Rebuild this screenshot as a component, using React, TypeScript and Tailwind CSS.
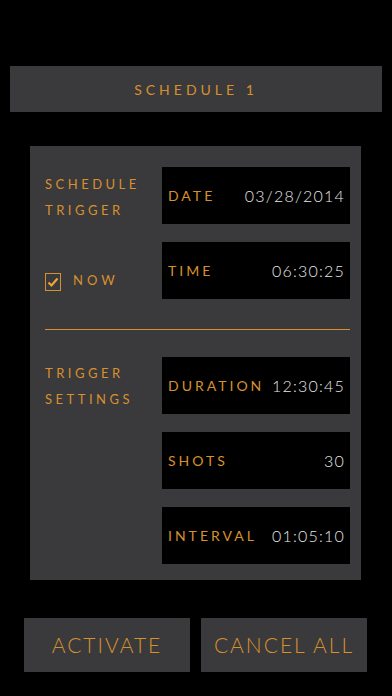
import React from 'react';

const orange = 'text-[#d8902c]';

const Field: React.FC<{ label: string; value: string }> = ({ label, value }) => (
  <div className="h-[57px] bg-black flex items-center justify-between pl-[6px] pr-[5px]">
    <span className={`${orange} text-[14px] tracking-[3px]`}>{label}</span>
    <span className="text-[#e6e6e6] text-[16px] tracking-[1.2px] font-light">{value}</span>
  </div>
);

const App: React.FC = () => {
  return (
    <div
      className="w-[392px] h-[696px] bg-black overflow-hidden font-normal"
      style={{ fontFamily: 'Lato, "Open Sans", sans-serif' }}
    >
      <div className="pt-[66px] px-[10px]">
        <div className="h-[46px] bg-[#3a3a3c] flex items-center justify-center">
          <span className={`${orange} text-[14px] tracking-[4px]`}>SCHEDULE 1</span>
        </div>
      </div>

      <div className="mt-[34px] mx-[30px] w-[331px] h-[434px] bg-[#3a3a3c] pt-[21px] pl-[15px] pr-[11px]">
        <div className="flex">
          <div className="w-[117px] flex flex-col">
            <div className={`${orange} text-[13px] tracking-[3.5px] leading-[26px] mt-[4px]`}>
              SCHEDULE
              <br />
              TRIGGER
            </div>
            <div className="mt-[50px] flex items-center">
              <div className="w-[16px] h-[18px] border border-[#d8902c] flex items-center justify-center">
                <svg width="12" height="12" viewBox="0 0 12 12">
                  <path d="M1.5 6.5 L4.5 9.5 L10.5 2.5" stroke="#f2a432" strokeWidth="2.2" fill="none" />
                </svg>
              </div>
              <span className={`${orange} text-[13px] tracking-[4px] ml-[12px] -mt-[2px]`}>NOW</span>
            </div>
          </div>
          <div className="flex-1 flex flex-col gap-[18px]">
            <Field label="DATE" value="03/28/2014" />
            <Field label="TIME" value="06:30:25" />
          </div>
        </div>

        <div className="h-px bg-[#d8902c] mt-[30px]" />

        <div className="flex mt-[27px]">
          <div className="w-[117px]">
            <div className={`${orange} text-[13px] tracking-[3.5px] leading-[26px] mt-[3px]`}>
              TRIGGER
              <br />
              SETTINGS
            </div>
          </div>
          <div className="flex-1 flex flex-col gap-[18px]">
            <Field label="DURATION" value="12:30:45" />
            <Field label="SHOTS" value="30" />
            <Field label="INTERVAL" value="01:05:10" />
          </div>
        </div>
      </div>

      <div className="mt-[38px] px-[24px] flex gap-[11px]">
        <div className="w-[166px] h-[54px] bg-[#3a3a3c] flex items-center justify-center">
          <span className={`${orange} text-[21px] tracking-[2px] font-light`}>ACTIVATE</span>
        </div>
        <div className="w-[166px] h-[54px] bg-[#3a3a3c] flex items-center justify-center">
          <span className={`${orange} text-[21px] tracking-[2px] font-light`}>CANCEL ALL</span>
        </div>
      </div>
    </div>
  );
};

export default App;
